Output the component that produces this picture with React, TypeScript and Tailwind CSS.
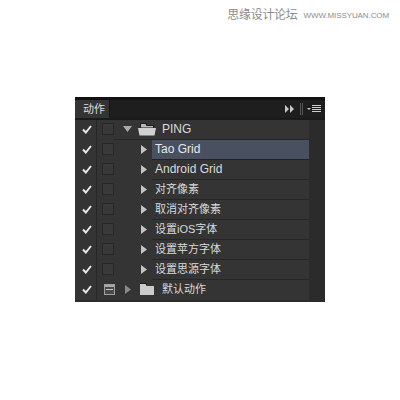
import React from 'react';

const font = { fontFamily: '"Liberation Sans", "Noto Sans CJK SC", sans-serif' };

const Check = () => (
    <svg width="10" height="9" viewBox="0 0 10 9" className="block">
        <path d="M1 4.5 L3.8 7.5 L9 1" fill="none" stroke="#e8e8e8" strokeWidth="2" />
    </svg>
);

const Arrow = ({ color = '#c4c4c4' }: { color?: string }) => (
    <svg width="6" height="9" viewBox="0 0 6 9" className="block">
        <path d="M0 0 L6 4.5 L0 9 Z" fill={color} />
    </svg>
);

const OpenFolder = () => (
    <svg width="18" height="13" viewBox="0 0 18 13" className="block">
        <path d="M2 0 H8 L9 2 H16 V5 H2 Z" fill="#1c1c1c" />
        <path d="M3 1 H7.5 L8.5 3 H15 V4.5 H3 Z" fill="#b8b8b8" />
        <path d="M0 5 H18 L16.5 12.5 H1.5 Z" fill="#d0d0d0" />
    </svg>
);

const ClosedFolder = () => (
    <svg width="14" height="12" viewBox="0 0 14 12" className="block">
        <path d="M0 0 H6 L7 2 H0 Z" fill="#1c1c1c" />
        <path d="M0 1 H5.5 L6.5 3 H14 V12 H0 Z" fill="#cccccc" />
    </svg>
);

const rows = [
    { label: 'Tao Grid', size: 'text-[12px]' },
    { label: 'Android Grid', size: 'text-[12px]' },
    { label: '对齐像素', size: 'text-[11px]' },
    { label: '取消对齐像素', size: 'text-[11px]' },
    { label: '设置iOS字体', size: 'text-[11px]' },
    { label: '设置苹方字体', size: 'text-[11px]' },
    { label: '设置思源字体', size: 'text-[11px]' },
];

const CheckCell = () => (
    <div className="w-[22px] flex items-center justify-center border-r border-[#272727] pl-0.5 pb-[2px]">
        <Check />
    </div>
);

const Box = () => <div className="w-[12px] h-[12px] border border-[#272727] bg-[#393939]" />;

const Row = ({ label, size, selected }: { label: string; size: string; selected?: boolean }) => (
    <div className="flex h-5 bg-[#343434]">
        <CheckCell />
        <div className="w-[55px] flex items-center shrink-0 pl-[5px] pb-[2px]">
            <Box />
            <div className="ml-[27px]">
                <Arrow />
            </div>
        </div>
        <div className={`flex-1 flex items-center pl-[3px] pb-[1px] border-b ${size} ${selected ? 'bg-[#49505f] border-[#222222] text-[#e8e8e8]' : 'border-[#262626] text-[#dadada]'}`}>
            {label}
        </div>
    </div>
);

export default function App() {
    return (
        <div className="w-[400px] h-[400px] bg-white overflow-hidden" style={font}>
            <div className="h-[97px] flex justify-end pt-[6px] pr-[11px]">
                <div className="flex items-start gap-[6px] text-[#8c8c8c]">
                    <span className="text-[12px] leading-[18px] tracking-[-0.3px]">思缘设计论坛</span>
                    <span className="text-[8px] leading-[20px] tracking-[-0.1px]">WWW.MISSYUAN.COM</span>
                </div>
            </div>
            <div className="ml-[75px] w-[250px] h-[205px] bg-[#2c2c2c] flex flex-col">
                <div className="h-[23px] flex items-end bg-[#1e1e1e] border-t-[3px] border-[#121212] border-b-2 border-b-[#1a1a1a]">
                    <div className="w-[35px] h-[18px] flex items-center pl-[8px] bg-[#343434] text-[11px] text-[#dedede] border-r border-[#151515]">
                        动作
                    </div>
                    <div className="flex-1 h-full flex items-center justify-end pr-[4px]">
                        <svg width="9" height="8" viewBox="0 0 9 8" className="block">
                            <path d="M0 0 L4 4 L0 8 Z M5 0 L9 4 L5 8 Z" fill="#c8c8c8" />
                        </svg>
                        <div className="ml-[6px] w-[3px] h-[12px] border-x border-[#555555]" />
                        <svg width="14" height="8" viewBox="0 0 14 8" className="block ml-[4px]">
                            <path d="M0 3 H4 L2 5 Z" fill="#c8c8c8" />
                            <path d="M5 0.5 H14 M5 2.5 H14 M5 4.5 H14 M5 6.5 H14" stroke="#cccccc" strokeWidth="1" />
                        </svg>
                    </div>
                </div>
                <div className="flex-1 flex">
                    <div className="w-[234px] flex flex-col">
                        <div className="flex h-5 bg-[#343434]">
                            <CheckCell />
                            <div className="flex items-center pl-[5px] pb-[2px]">
                                <Box />
                            </div>
                            <div className="flex-1 flex items-center pl-[9px] pb-[1px] border-b border-[#262626] text-[12px] text-[#dadada]">
                                <svg width="9" height="6" viewBox="0 0 9 6" className="block">
                                    <path d="M0 0 H9 L4.5 6 Z" fill="#aaaaaa" />
                                </svg>
                                <div className="ml-[6px]">
                                    <OpenFolder />
                                </div>
                                <span className="ml-[6px]">PING</span>
                            </div>
                        </div>
                        {rows.map((r, i) => (
                            <Row key={r.label} label={r.label} size={r.size} selected={i === 0} />
                        ))}
                        <div className="flex h-5 bg-[#343434]">
                            <CheckCell />
                            <div className="w-[18px] flex items-center justify-center pl-[6px] pb-[2px]">
                                <div className="w-[11px] h-[11px] border border-[#a0a0a0] bg-[#4a4a4a] flex flex-col items-center">
                                    <div className="w-[9px] h-[2px] bg-[#a8a8a8]" />
                                    <div className="w-[7px] h-[1px] mt-[2px] bg-[#c8c8c8]" />
                                </div>
                            </div>
                            <div className="flex-1 flex items-center pl-[10px] pb-[2px] text-[11px] text-[#dadada]">
                                <Arrow color="#8a8a8a" />
                                <div className="ml-[9px]">
                                    <ClosedFolder />
                                </div>
                                <span className="ml-[8px]">默认动作</span>
                            </div>
                        </div>
                    </div>
                    <div className="flex-1 bg-[#2b2b2b]" />
                </div>
            </div>
        </div>
    );
}
